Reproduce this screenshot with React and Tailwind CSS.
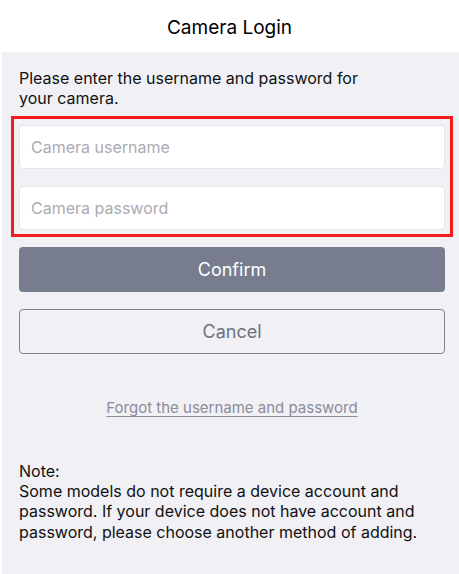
import React, { useState } from "react";

const App = () => {
  const [username, setUsername] = useState("");
  const [password, setPassword] = useState("");

  return (
    <div
      className="w-[459px] h-[574px] flex flex-col bg-white overflow-hidden"
      style={{ fontFamily: "Inter, 'Noto Sans', sans-serif" }}
    >
      {/* Header */}
      <div className="h-[52px] flex items-center justify-center pt-[5px]">
        <h1 className="text-[19px] text-black">Camera Login</h1>
      </div>

      {/* Body */}
      <div className="flex-1 ml-[2px] bg-[#f0f0f5] flex flex-col pl-[17px] pr-[14px]">
        <p className="mt-[16px] text-[16px] leading-[20px] text-[#111] pr-[70px]">
          Please enter the username and password for your camera.
        </p>

        {/* Inputs (highlighted) */}
        <div className="mt-[8px] -mx-[8px] border-[3px] border-[#f41c1c] px-[5px] pt-[6px] pb-[4px] flex flex-col gap-[17px]">
          <input
            type="text"
            value={username}
            onChange={(e) => setUsername(e.target.value)}
            placeholder="Camera username"
            className="h-[44px] w-full rounded-[4px] bg-white border border-[#e4e4ea] px-[11px] text-[16px] text-[#222] placeholder:text-[#ababb2] outline-none"
          />
          <input
            type="password"
            value={password}
            onChange={(e) => setPassword(e.target.value)}
            placeholder="Camera password"
            className="h-[44px] w-full rounded-[4px] bg-white border border-[#e4e4ea] px-[11px] text-[16px] text-[#222] placeholder:text-[#ababb2] outline-none"
          />
        </div>

        {/* Buttons */}
        <button className="mt-[10px] h-[45px] w-full rounded-[4px] bg-[#777c8e] text-white text-[18px]">
          Confirm
        </button>
        <button className="mt-[17px] h-[45px] w-full rounded-[4px] border border-[#7d808e] text-[#6e7180] text-[18px]">
          Cancel
        </button>

        <div className="mt-[43px] flex justify-center">
          <a href="#" className="text-[15px] text-[#8a8d9a] underline underline-offset-[3px]">
            Forgot the username and password
          </a>
        </div>

        {/* Note */}
        <div className="mt-[41px] text-[16px] leading-[20.4px] text-[#111]">
          <p>Note:</p>
          <p>
            Some models do not require a device account and password. If your device does not have account and password, please choose another method of adding.
          </p>
        </div>
      </div>
    </div>
  );
};

export default App;
